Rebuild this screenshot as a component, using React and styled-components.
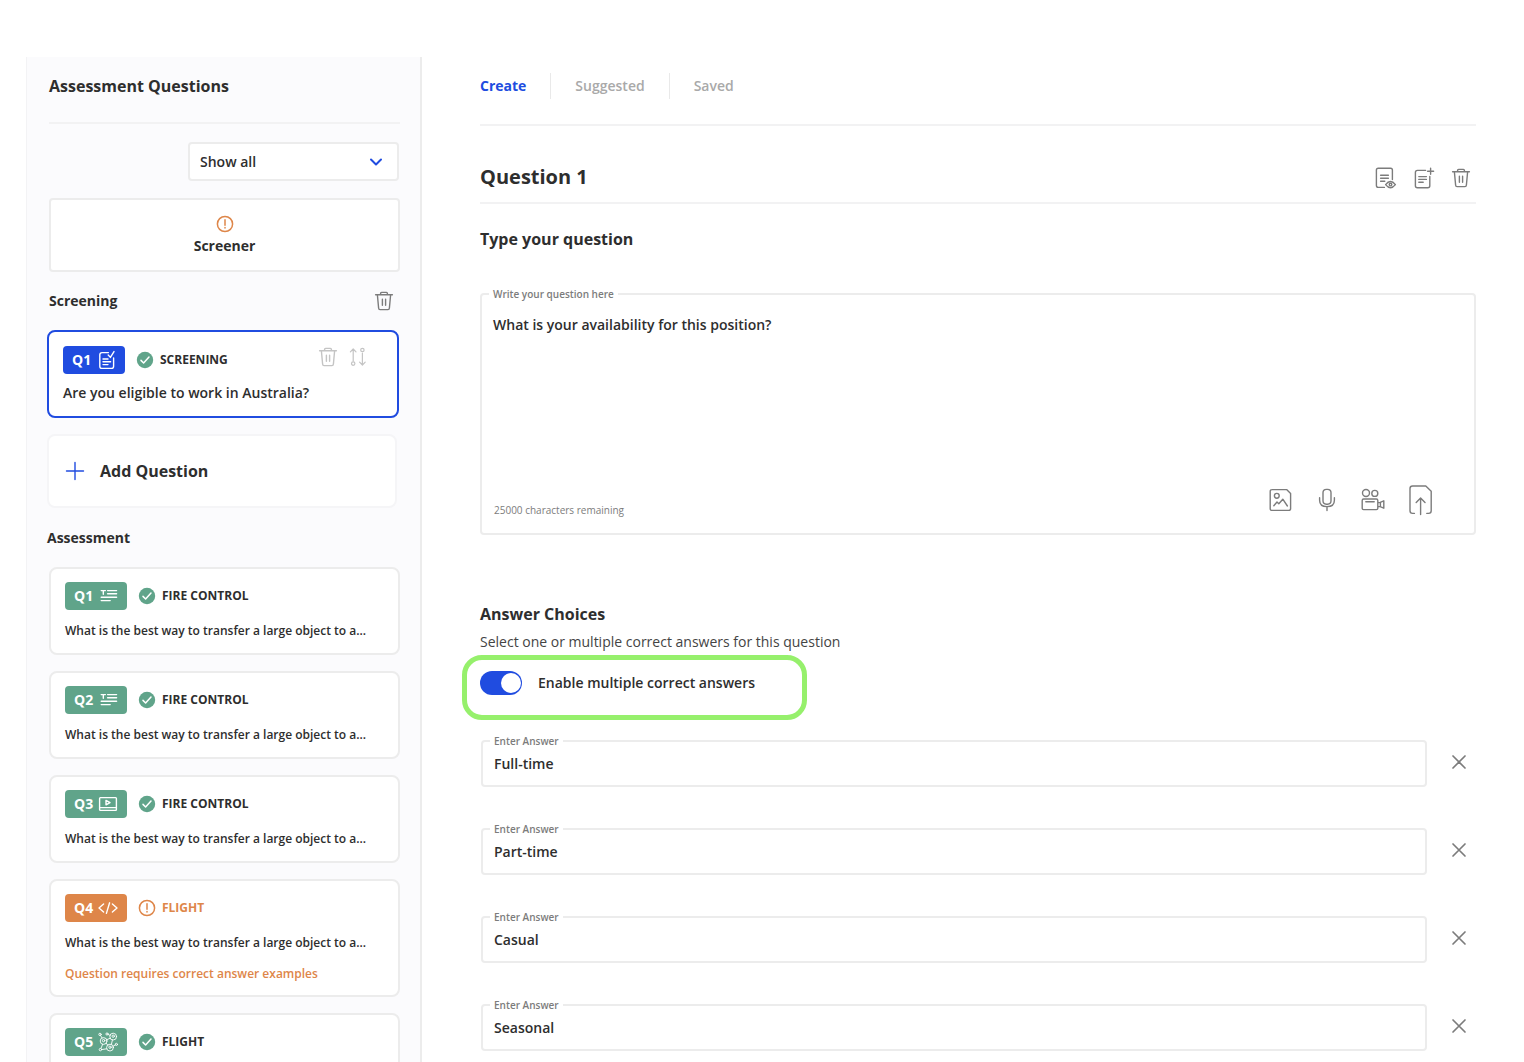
import React, { useState } from "react";
import styled, { createGlobalStyle, css } from "styled-components";

const color = {
  ink: "#2e2e2e",
  muted: "#7c7c7c",
  faint: "#a9a9a9",
  line: "#ececec",
  rule: "#f2f2f3",
  panel: "#fbfbfd",
  blue: "#204ce0",
  green: "#60a48a",
  orange: "#de8649",
  highlight: "#96f06c",
};

const GlobalStyle = createGlobalStyle`
  *, *::before, *::after { box-sizing: border-box; }
  body {
    margin: 0;
    background: #fff;
    color: ${color.ink};
    font-family: "Open Sans", "Noto Sans", sans-serif;
    font-size: 14px;
    line-height: 20px;
  }
  button, input, select, textarea { font: inherit; color: inherit; }
  h1, h2, h3, p, ul { margin: 0; padding: 0; }
`;

const Page = styled.div`
  display: flex;
  height: 100vh;
  padding: 57px 48px 0 26px;
  overflow: hidden;
`;

const Sidebar = styled.aside`
  flex: 0 0 396px;
  padding: 0 20px;
  background: ${color.panel};
  border-left: 1px solid #f3f3f5;
  border-right: 2px solid ${color.line};
`;

const SidebarTitle = styled.h2`
  margin-left: 2px;
  padding: 17px 0 24px;
  border-bottom: 2px solid ${color.rule};
  font-size: 16px;
  line-height: 24px;
  font-weight: 700;
`;

const FilterRow = styled.div`
  display: flex;
  justify-content: flex-end;
  padding: 18px 1px 17px;
`;

const SelectWrap = styled.div`
  position: relative;
  width: 211px;

  svg {
    position: absolute;
    right: 16px;
    top: 13px;
    pointer-events: none;
  }
`;

const Select = styled.select`
  appearance: none;
  width: 100%;
  height: 39px;
  padding: 0 40px 0 10px;
  border: 2px solid ${color.line};
  border-radius: 4px;
  background: #fff;
  font-weight: 600;
`;

const ScreenerButton = styled.button`
  display: flex;
  flex-direction: column;
  align-items: center;
  justify-content: center;
  gap: 3px;
  width: calc(100% - 2px);
  height: 74px;
  margin-left: 2px;
  border: 2px solid ${color.line};
  border-radius: 4px;
  background: #fff;
  font-weight: 700;
`;

const SectionHead = styled.div`
  display: flex;
  align-items: center;
  justify-content: space-between;
  height: 58px;
  padding: 0 6px 0 2px;
`;

const SectionTitle = styled.h3`
  font-size: 14px;
  line-height: 20px;
  font-weight: 700;
`;

const AssessmentTitle = styled(SectionTitle)`
  padding: 20px 0 19px;
`;

const CardList = styled.ul`
  display: flex;
  flex-direction: column;
  gap: 16px;
  padding-left: 2px;
  list-style: none;
`;

const ActiveList = styled(CardList)`
  padding: 0 1px 0 0;
`;

const Card = styled.li`
  display: flex;
  flex-direction: column;
  gap: ${(p) => (p.$active ? 9 : 11)}px;
  min-height: 88px;
  padding: ${(p) => (p.$active ? 14 : 13)}px 14px 11px;
  border: 2px solid ${(p) => (p.$active ? color.blue : color.line)};
  border-radius: 8px;
  background: #fff;
`;

const CardTop = styled.div`
  display: flex;
  align-items: center;
  height: 28px;
`;

const Badge = styled.span`
  display: flex;
  align-items: center;
  justify-content: space-between;
  width: 62px;
  height: 28px;
  margin-right: 11px;
  padding: 0 9px;
  border-radius: 4px;
  background: ${(p) => p.$tone};
  color: #fff;
  font-weight: 700;
`;

const Category = styled.span`
  margin-left: 6px;
  font-size: 12px;
  font-weight: 700;
  color: ${(p) => (p.$warn ? color.orange : color.ink)};
`;

const CardTools = styled.div`
  display: flex;
  gap: 11px;
  margin: 0 16px 6px auto;
`;

const CardText = styled.p`
  font-size: ${(p) => (p.$large ? 14 : 12)}px;
  line-height: 20px;
  font-weight: 600;
  white-space: nowrap;
`;

const CardWarning = styled(CardText)`
  color: ${color.orange};
`;

const AddButton = styled.button`
  display: flex;
  align-items: center;
  gap: 15px;
  width: calc(100% - 3px);
  height: 74px;
  margin-top: 16px;
  padding: 0 16px;
  border: 2px solid #f5f5f7;
  border-radius: 8px;
  background: #fff;
  font-size: 16px;
  font-weight: 700;
`;

const IconButton = styled.button`
  display: inline-flex;
  padding: 0;
  border: 0;
  background: none;
  color: ${(p) => (p.$faint ? "#c4c4c4" : color.muted)};
  cursor: pointer;
`;

const Main = styled.main`
  flex: 1;
  min-width: 0;
  padding-left: 58px;
`;

const Tabs = styled.nav`
  display: flex;
  align-items: center;
  height: 69px;
  padding-bottom: 9px;
  border-bottom: 2px solid ${color.rule};
`;

const Tab = styled.button`
  height: 26px;
  padding: 0 24px;
  border: 0;
  border-right: 1px solid #e9e9e9;
  background: none;
  color: ${(p) => (p.$active ? color.blue : color.faint)};
  font-weight: ${(p) => (p.$active ? 700 : 600)};
  cursor: pointer;

  &:first-child { padding-left: 0; }
  &:last-child { border-right: 0; }
`;

const QuestionHead = styled.header`
  display: flex;
  align-items: center;
  justify-content: space-between;
  height: 78px;
  padding: 26px 5px 0 0;
  border-bottom: 2px solid ${color.rule};
`;

const QuestionTitle = styled.h1`
  font-size: 20px;
  line-height: 28px;
  font-weight: 700;
`;

const HeadTools = styled.div`
  display: flex;
  align-items: center;
  gap: 16px;
  padding-top: 2px;
`;

const Heading = styled.h2`
  font-size: 16px;
  line-height: 24px;
  font-weight: 700;
`;

const EditorSection = styled.section`
  display: flex;
  flex-direction: column;
  gap: 42px;
  padding-top: 23px;
`;

const Field = styled.div`
  position: relative;
  flex: 1;
  border: 2px solid ${color.line};
  border-radius: 4px;
`;

const FloatingLabel = styled.label`
  position: absolute;
  left: 7px;
  top: -9px;
  padding: 0 4px;
  background: #fff;
  color: ${color.muted};
  font-size: 10px;
  line-height: 16px;
  font-weight: 600;
`;

const QuestionText = styled.textarea`
  display: block;
  width: 100%;
  height: 184px;
  padding: 20px 11px;
  border: 0;
  outline: 0;
  resize: none;
  background: none;
  font-weight: 600;
`;

const EditorFooter = styled.div`
  display: flex;
  align-items: flex-end;
  justify-content: space-between;
  height: 54px;
  padding: 0 41px 15px 12px;
`;

const Remaining = styled.span`
  color: ${color.muted};
  font-size: 10px;
  line-height: 16px;
`;

const MediaTools = styled.div`
  display: flex;
  align-items: center;
  gap: 22px;
  padding-bottom: 2px;
`;

const AnswerSection = styled.section`
  padding-top: 67px;
`;

const Hint = styled.p`
  margin-top: 6px;
  color: #444;
`;

const Highlight = styled.div`
  display: flex;
  width: fit-content;
  height: 65px;
  margin: 3px 0 0 -18px;
  padding: 11px 47px 0 13px;
  border: 5px solid ${color.highlight};
  border-radius: 20px;
`;

const SwitchLabel = styled.label`
  display: flex;
  gap: 16px;
  height: 24px;
  line-height: 24px;
  font-weight: 600;
`;

const Switch = styled.input`
  appearance: none;
  display: flex;
  justify-content: ${(p) => (p.checked ? "flex-end" : "flex-start")};
  width: 42px;
  height: 24px;
  margin: 0;
  padding: 2px 1px;
  border-radius: 12px;
  background: ${(p) => (p.checked ? color.blue : "#c4c4c4")};
  cursor: pointer;

  &::before {
    content: "";
    width: 20px;
    height: 20px;
    border-radius: 50%;
    background: #fff;
  }
`;

const Answers = styled.div`
  display: flex;
  flex-direction: column;
  gap: 41px;
  padding-top: 20px;
`;

const AnswerRow = styled.div`
  display: flex;
  align-items: center;
  gap: 24px;
  padding: 0 9px 0 1px;

  > button { margin-bottom: 3px; }
`;

const AnswerInput = styled.input`
  display: block;
  width: 100%;
  height: 43px;
  padding: 0 11px;
  border: 0;
  outline: 0;
  background: none;
  font-weight: 600;
`;

const strokeIcon = css`
  display: block;
  flex: none;
  fill: none;
  stroke: currentColor;
  stroke-linecap: round;
  stroke-linejoin: round;
`;

const Svg = styled.svg`
  ${strokeIcon}
`;

const Icon = ({ w = 20, h = w, sw = 1.4, children }) => (
  <Svg width={w} height={h} viewBox={`0 0 ${w} ${h}`} strokeWidth={sw} aria-hidden="true">
    {children}
  </Svg>
);

const Chevron = () => (
  <Icon w={14} sw={2}>
    <path d="M2 4.5 7 9.5l5-5" stroke={color.blue} />
  </Icon>
);

const Alert = () => (
  <Icon w={18} sw={1.5}>
    <g stroke={color.orange}>
      <circle cx="9" cy="9" r="7.6" />
      <path d="M9 4.8v5.4M9 12.6v.3" />
    </g>
  </Icon>
);

const Check = () => (
  <Icon w={18}>
    <circle cx="9" cy="9" r="8.2" fill={color.green} stroke="none" />
    <path d="m5 9.4 2.6 2.6L13 6" stroke="#fff" strokeWidth="1.5" />
  </Icon>
);

const Trash = () => (
  <Icon w={20}>
    <path d="M1.6 3.8h16.8M6.6 3.6V2.4q0-1 1-1h4.8q1 0 1 1v1.2M3.4 4l1.2 13q.1 1.6 1.4 1.6h8q1.3 0 1.4-1.6l1.2-13M8.4 8.2v6M11.6 8.2v6" />
  </Icon>
);

const Reorder = () => (
  <Icon w={18} h={20} sw={1.2}>
    <path d="M4.2 14V2M1.4 4.8 4.2 2 7 4.8M13.4 6v12M10.6 15.2l2.8 2.8 2.8-2.8" />
    <circle cx="4.2" cy="16.6" r="1.7" />
    <circle cx="13.4" cy="3" r="1.7" />
  </Icon>
);

const Plus = () => (
  <Icon w={20}>
    <path d="M10 1.5v17M1.5 10h17" stroke={color.blue} />
  </Icon>
);

const Close = () => (
  <Icon w={16} sw={1.7}>
    <path d="m2 2 12 12M14 2 2 14" />
  </Icon>
);

const Preview = () => (
  <Icon w={22} h={22}>
    <path d="M9.4 20.4H3.2q-1.8 0-1.8-1.8V3q0-1.8 1.8-1.8h12.4q1.8 0 1.8 1.8v9.6M5.6 8.2h7.8M5.6 11.2h7.8M5.6 14.2h4.2" />
    <path d="M10.6 17.6q4.9-6.2 9.8 0-4.9 6.2-9.8 0Z" />
    <circle cx="15.5" cy="17.6" r="1.3" />
  </Icon>
);

const NewPage = () => (
  <Icon w={22} h={22}>
    <path d="M12.6 3.4H4.4Q2.4 3.4 2.4 5.4v13.4q0 2 2 2h10.4q2 0 2-2V9.4M5.8 9.6h7.6M5.8 12.4h7.6M5.8 15.2h4.4M17.6 1.2v6M14.6 4.2h6" />
  </Icon>
);

const Picture = () => (
  <Icon w={24}>
    <path d="M3.2 1.6h14.4l4 4v14.8q0 2-2 2H3.2q-2 0-2-2V3.6q0-2 2-2Z" />
    <circle cx="7.8" cy="7.8" r="2.4" />
    <path d="M4.8 17.8 8 14l1.8 1.8 4-4.6 4.6 6.8" />
  </Icon>
);

const Mic = () => (
  <Icon w={24}>
    <rect x="8" y="1.4" width="8" height="14.8" rx="3.4" />
    <path d="M4.6 9.8v2.4q0 6.4 7.4 6.4t7.4-6.4V9.8M12 18.8v3.8" />
  </Icon>
);

const VideoCamera = () => (
  <Icon w={24}>
    <circle cx="5" cy="5" r="3.5" />
    <circle cx="13.8" cy="5.4" r="3" />
    <path d="M2.6 11h12.8q1.4 0 1.4 1.4v7.8q0 1.4-1.4 1.4H2.6q-1.4 0-1.4-1.4v-7.8Q1.2 11 2.6 11ZM4.8 13.8h8.4M17 14.6l2.2-.2 3.6-1.6v7.4l-3.6-1.6-2.2-.2M19.4 14.6v4" />
  </Icon>
);

const Upload = () => (
  <Icon w={26} h={32}>
    <path d="M7.4 29.4H5.6Q3 29.4 3 26.8V4.6Q3 2 5.6 2h13.2l5.4 5.2v19.6q0 2.6-2.6 2.6h-1.8M13.6 30.6V14M9.2 18.4l4.4-4.4 4.4 4.4" />
  </Icon>
);

const FormCheck = () => (
  <Icon w={18} h={20}>
    <path d="M10.4 2.6H4Q1.8 2.6 1.8 4.8v11.4q0 2.2 2.2 2.2h9.4q2.2 0 2.2-2.2V8M5 9h5M5 11.8h7.6M5 14.6h5M10.2 5l2.2 2.4L16 1.6" />
  </Icon>
);

const TextLines = () => (
  <Icon w={18} h={18}>
    <path d="M1.2 3.6h4.2M3.3 3.6v3.6M7.6 3.6h9M7.6 6.8h9M1.2 10.2h15.4M1.2 13.6h9" />
  </Icon>
);

const VideoScreen = () => (
  <Icon w={20} h={18}>
    <path d="M2.4 2.6h15.2q.8 0 .8.8v11.2q0 .8-.8.8H2.4q-.8 0-.8-.8V3.4q0-.8.8-.8ZM1.8 12.6h16.4M8 5.4v4.4l4-2.2Z" />
  </Icon>
);

const Code = () => (
  <Icon w={20} h={18}>
    <path d="M5.6 5 1 9l4.6 4M14.4 5 19 9l-4.6 4M11.6 3.8 8.4 14.4" />
  </Icon>
);

const Network = () => (
  <Icon w={20} h={20} sw={0.9}>
    <circle cx="5.6" cy="9" r="3.4" />
    <circle cx="5.6" cy="8.6" r="1.2" />
    <circle cx="15.2" cy="4.6" r="3.4" />
    <circle cx="15.2" cy="4.2" r="1.2" />
    <circle cx="12" cy="15.6" r="3.4" />
    <circle cx="12" cy="15.2" r="1.2" />
    <circle cx="2" cy="2.4" r="1.2" />
    <circle cx="9" cy="2" r="1.1" />
    <circle cx="2.4" cy="17.6" r="1.2" />
    <circle cx="18.4" cy="12.4" r="1.1" />
    <path d="M2.6 3.6 4 5.8M10 2.4l2 1M3 16.4l1.6-4M8.6 7.8l3.6-1.6M8.2 11.2l1.6 2M14.4 8l-1 4.4M17.4 12.8l-2.4 1.6M3.6 17.6l5-.8" />
  </Icon>
);

const transferQuestion = "What is the best way to transfer a large object to a...";

const assessment = [
  { id: "Q1", icon: TextLines, category: "FIRE CONTROL", text: transferQuestion },
  { id: "Q2", icon: TextLines, category: "FIRE CONTROL", text: transferQuestion },
  { id: "Q3", icon: VideoScreen, category: "FIRE CONTROL", text: transferQuestion },
  {
    id: "Q4",
    icon: Code,
    category: "FLIGHT",
    text: transferQuestion,
    warning: "Question requires correct answer examples",
  },
  { id: "Q5", icon: Network, category: "FLIGHT" },
];

function AssessmentCard({ id, icon: TypeIcon, category, text, warning }) {
  return (
    <Card>
      <CardTop>
        <Badge $tone={warning ? color.orange : color.green}>
          {id}
          <TypeIcon />
        </Badge>
        {warning ? <Alert /> : <Check />}
        <Category $warn={!!warning}>{category}</Category>
      </CardTop>
      {text && <CardText>{text}</CardText>}
      {warning && <CardWarning>{warning}</CardWarning>}
    </Card>
  );
}

export default function App() {
  const [multiple, setMultiple] = useState(true);
  const [question, setQuestion] = useState("What is your availability for this position?");
  const [answers, setAnswers] = useState(["Full-time", "Part-time", "Casual", "Seasonal"]);

  const editAnswer = (index, value) =>
    setAnswers(answers.map((a, i) => (i === index ? value : a)));
  const removeAnswer = (index) => setAnswers(answers.filter((_, i) => i !== index));

  return (
    <>
      <GlobalStyle />
      <Page>
        <Sidebar>
          <SidebarTitle>Assessment Questions</SidebarTitle>
          <FilterRow>
            <SelectWrap>
              <Select aria-label="Filter questions">
                <option>Show all</option>
              </Select>
              <Chevron />
            </SelectWrap>
          </FilterRow>
          <ScreenerButton type="button">
            <Alert />
            Screener
          </ScreenerButton>

          <SectionHead>
            <SectionTitle>Screening</SectionTitle>
            <IconButton type="button" aria-label="Delete section"><Trash /></IconButton>
          </SectionHead>
          <ActiveList>
            <Card $active>
              <CardTop>
                <Badge $tone={color.blue}>
                  Q1
                  <FormCheck />
                </Badge>
                <Check />
                <Category>SCREENING</Category>
                <CardTools>
                  <IconButton type="button" $faint aria-label="Delete question"><Trash /></IconButton>
                  <IconButton type="button" $faint aria-label="Reorder question"><Reorder /></IconButton>
                </CardTools>
              </CardTop>
              <CardText $large>Are you eligible to work in Australia?</CardText>
            </Card>
          </ActiveList>
          <AddButton type="button">
            <Plus />
            Add Question
          </AddButton>

          <AssessmentTitle>Assessment</AssessmentTitle>
          <CardList>
            {assessment.map((item) => (
              <AssessmentCard key={item.id} {...item} />
            ))}
          </CardList>
        </Sidebar>

        <Main>
          <Tabs>
            <Tab type="button" $active>Create</Tab>
            <Tab type="button">Suggested</Tab>
            <Tab type="button">Saved</Tab>
          </Tabs>

          <QuestionHead>
            <QuestionTitle>Question 1</QuestionTitle>
            <HeadTools>
              <IconButton type="button" aria-label="Preview question"><Preview /></IconButton>
              <IconButton type="button" aria-label="New question"><NewPage /></IconButton>
              <IconButton type="button" aria-label="Delete question"><Trash /></IconButton>
            </HeadTools>
          </QuestionHead>

          <EditorSection>
            <Heading>Type your question</Heading>
            <Field>
              <FloatingLabel htmlFor="question">Write your question here</FloatingLabel>
              <QuestionText
                id="question"
                value={question}
                onChange={(e) => setQuestion(e.target.value)}
              />
              <EditorFooter>
                <Remaining>25000 characters remaining</Remaining>
                <MediaTools>
                  <IconButton type="button" aria-label="Add image"><Picture /></IconButton>
                  <IconButton type="button" aria-label="Record audio"><Mic /></IconButton>
                  <IconButton type="button" aria-label="Record video"><VideoCamera /></IconButton>
                  <IconButton type="button" aria-label="Upload file"><Upload /></IconButton>
                </MediaTools>
              </EditorFooter>
            </Field>
          </EditorSection>

          <AnswerSection>
            <Heading>Answer Choices</Heading>
            <Hint>Select one or multiple correct answers for this question</Hint>
            <Highlight>
              <SwitchLabel>
                <Switch
                  type="checkbox"
                  role="switch"
                  checked={multiple}
                  onChange={(e) => setMultiple(e.target.checked)}
                />
                Enable multiple correct answers
              </SwitchLabel>
            </Highlight>
            <Answers>
              {answers.map((answer, i) => (
                <AnswerRow key={i}>
                  <Field>
                    <FloatingLabel htmlFor={`answer-${i}`}>Enter Answer</FloatingLabel>
                    <AnswerInput
                      id={`answer-${i}`}
                      value={answer}
                      onChange={(e) => editAnswer(i, e.target.value)}
                    />
                  </Field>
                  <IconButton type="button" aria-label={`Remove ${answer}`} onClick={() => removeAnswer(i)}>
                    <Close />
                  </IconButton>
                </AnswerRow>
              ))}
            </Answers>
          </AnswerSection>
        </Main>
      </Page>
    </>
  );
}
